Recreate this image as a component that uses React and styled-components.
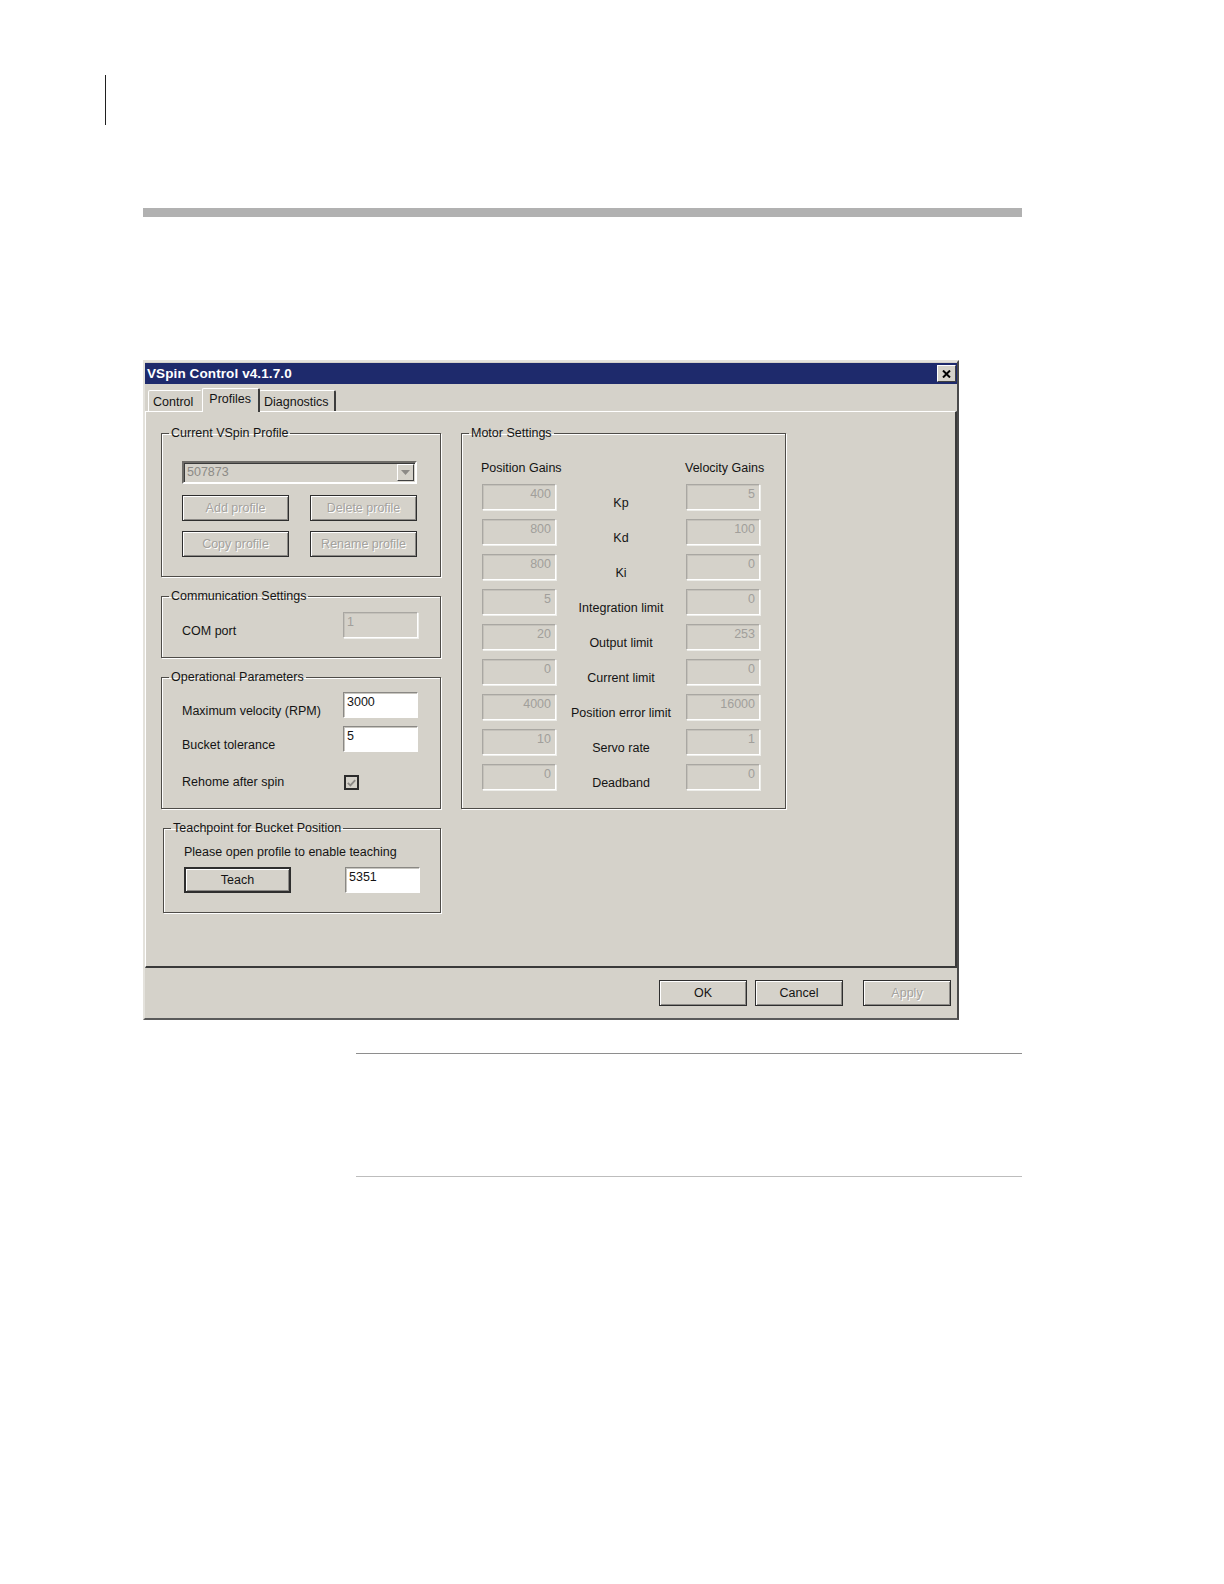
import React from 'react'
import styled, { createGlobalStyle, css } from 'styled-components'

const GlobalStyle = createGlobalStyle`
  html, body {
    margin: 0;
    background: #ffffff;
    font-family: "Liberation Sans", Arial, sans-serif;
  }
`

const Page = styled.div`
  padding: 75px 0 40px;
  background: #ffffff;
`

const Marker = styled.div`
  margin-left: 105px;
  width: 1px;
  height: 50px;
  background: #202020;
`

const Rule = styled.div`
  margin: 83px 0 0 143px;
  width: 879px;
  height: 9px;
  background: #b1b1b1;
`

const NoteLine = styled.div`
  margin: ${props => props.$top}px 0 0 356px;
  width: 666px;
  height: 1px;
  background: ${props => props.$color};
`

const Window = styled.div`
  margin: 143px 0 0 143px;
  width: 816px;
  height: 660px;
  box-sizing: border-box;
  display: flex;
  flex-direction: column;
  padding-top: 1px;
  background: #d5d2ca;
  border: 2px solid;
  border-color: #e4e2dc #4a4a4a #5a5a5a #e4e2dc;
  font-size: 12.5px;
  color: #141414;
`

const TitleBar = styled.div`
  height: 21px;
  flex: none;
  display: flex;
  align-items: center;
  justify-content: space-between;
  padding: 0 1px 0 2px;
  background: #1e2a6c;
`

const Title = styled.div`
  color: #ffffff;
  font-weight: bold;
  font-size: 13.5px;
  letter-spacing: 0.1px;
`

const CloseBox = styled.div`
  width: 19px;
  height: 17px;
  box-sizing: border-box;
  display: flex;
  align-items: center;
  justify-content: center;
  background: #d5d2ca;
  border: 1px solid;
  border-color: #ffffff #404040 #404040 #ffffff;
`

const TabStrip = styled.div`
  height: 27px;
  flex: none;
  display: flex;
  align-items: flex-end;
  padding-left: 3px;
  position: relative;
  z-index: 1;
`

const Tab = styled.div`
  height: ${props => (props.$active ? 24 : 21)}px;
  box-sizing: border-box;
  padding: ${props => (props.$active ? '3px 7px 0 6px' : '4px 5px 0 4px')};
  margin: ${props => (props.$active ? '0 -1px -1px 0' : '0')};
  border-top: 1px solid #ffffff;
  border-left: 1px solid #ffffff;
  border-right: 2px solid #3c3c3c;
  border-radius: 2px 2px 0 0;
  background: #d5d2ca;
  ${props =>
    props.$plain &&
    css`
      padding-right: 7px;
      border-right-color: transparent;
    `}
  ${props =>
    props.$active &&
    css`
      position: relative;
      z-index: 2;
    `}
`

const TabPanel = styled.div`
  height: 557px;
  flex: none;
  box-sizing: border-box;
  display: flex;
  align-items: flex-start;
  gap: 20px;
  padding: 14px 0 0 15px;
  border-top: 1px solid #ffffff;
  border-left: 1px solid #ffffff;
  border-right: 2px solid #3a3a3a;
  border-bottom: 2px solid #3a3a3a;
`

const Column = styled.div`
  width: 280px;
  display: flex;
  flex-direction: column;
  gap: 12px;
`

const Group = styled.fieldset`
  margin: ${props => props.$mt || 0}px 0 0 ${props => props.$indent || 0}px;
  min-width: 0;
  width: ${props => props.$width}px;
  box-sizing: border-box;
  padding: ${props => props.$pt}px 0 ${props => props.$pb}px 20px;
  border: 1px solid #4e4c48;
  box-shadow: inset 1px 1px 0 #ffffff, 1px 1px 0 #ffffff;
`

const Legend = styled.legend`
  margin-left: -13px;
  padding: 0 2px;
  line-height: 14px;
  font-size: 12.5px;
`

const ProfileGrid = styled.div`
  display: grid;
  grid-template-columns: 107px 107px;
  column-gap: 21px;
  row-gap: 10px;
`

const Combo = styled.div`
  grid-column: 1 / span 2;
  width: 235px;
  height: 23px;
  box-sizing: border-box;
  margin-bottom: 1px;
  display: flex;
  justify-content: space-between;
  border: 2px solid;
  border-color: #6e6c68 #ffffff #ffffff #6e6c68;
  box-shadow: inset 1px 1px 0 #3a3a3a;
  color: #8c8a86;
  padding: 2px 1px 0 3px;
  line-height: 14px;
`

const ComboArrow = styled.div`
  width: 17px;
  height: 17px;
  margin-top: -1px;
  box-sizing: border-box;
  display: flex;
  align-items: center;
  justify-content: center;
  border: 1px solid;
  border-color: #ffffff #404040 #404040 #ffffff;
  background: #d5d2ca;
`

const Button = styled.div`
  width: ${props => props.$width || 107}px;
  height: 26px;
  box-sizing: border-box;
  display: flex;
  align-items: center;
  justify-content: center;
  border: ${props => (props.$default ? 2 : 1)}px solid #2e2e2e;
  box-shadow: inset 1px 1px 0 #ffffff, inset -1px -1px 0 #8c8a86;
  background: #d5d2ca;
  color: ${props => (props.$disabled ? '#a4a29e' : '#141414')};
  text-shadow: ${props => (props.$disabled ? '1px 1px 0 #ffffff' : 'none')};
`

const FieldRow = styled.div`
  display: grid;
  grid-template-columns: 161px 75px;
  align-items: end;
  margin-top: ${props => props.$gap || 0}px;
`

const Label = styled.div`
  line-height: 14px;
  white-space: nowrap;
`

const Field = styled.div`
  height: 26px;
  box-sizing: border-box;
  padding: 2px 4px 0 3px;
  line-height: 14px;
  border: 1px solid;
  ${props =>
    props.$disabled
      ? css`
          background: #d5d2ca;
          color: #a19f9b;
          border-color: #a9a7a2 #ffffff #ffffff #a9a7a2;
          box-shadow: inset 1px 1px 0 #c4c1ba, 1px 1px 0 #eeeeea;
          text-align: ${props.$right ? 'right' : 'left'};
        `
      : css`
          background: #ffffff;
          color: #141414;
          border-color: #8a8884 #ffffff #ffffff #8a8884;
          box-shadow: inset 1px 1px 0 #c8c6c0;
        `}
`

const CheckBox = styled.div`
  width: 15px;
  height: 15px;
  box-sizing: border-box;
  margin: 0 0 -1px 1px;
  border: 2px solid #2c2c2c;
  background: #d5d2ca;
  display: flex;
  align-items: center;
  justify-content: center;
`

const Note = styled.div`
  line-height: 14px;
  margin-bottom: 8px;
`

const MotorGrid = styled.div`
  display: grid;
  grid-template-columns: 74px 130px 74px;
  grid-template-rows: 14px repeat(9, 26px);
  row-gap: 9px;
`

const GainHead = styled.div`
  line-height: 14px;
  white-space: nowrap;
  margin-left: -1px;
  ${props =>
    props.$right &&
    css`
      grid-column: 3;
    `}
`

const GainLabel = styled.div`
  align-self: end;
  text-align: center;
  line-height: 14px;
  white-space: nowrap;
`

const ButtonBar = styled.div`
  flex: 1;
  display: flex;
  justify-content: flex-end;
  align-items: flex-start;
  padding: 12px 6px 0 0;
  gap: 8px;
`

const ApplySpacer = styled.div`
  width: 4px;
`

const motorRows = [
  ['400', 'Kp', '5'],
  ['800', 'Kd', '100'],
  ['800', 'Ki', '0'],
  ['5', 'Integration limit', '0'],
  ['20', 'Output limit', '253'],
  ['0', 'Current limit', '0'],
  ['4000', 'Position error limit', '16000'],
  ['10', 'Servo rate', '1'],
  ['0', 'Deadband', '0']
]

export default function App() {
  return (
    <Page>
      <GlobalStyle />
      <Marker />
      <Rule />
      <Window>
        <TitleBar>
          <Title>VSpin Control v4.1.7.0</Title>
          <CloseBox>
            <svg width="9" height="8" viewBox="0 0 9 8">
              <path d="M1 0.5 L8 7.5 M8 0.5 L1 7.5" stroke="#000" strokeWidth="2" />
            </svg>
          </CloseBox>
        </TitleBar>
        <TabStrip>
          <Tab $plain>Control</Tab>
          <Tab $active>Profiles</Tab>
          <Tab>Diagnostics</Tab>
        </TabStrip>
        <TabPanel>
          <Column>
            <Group $width={280} $pt={21} $pb={19}>
              <Legend>Current VSpin Profile</Legend>
              <ProfileGrid>
                <Combo>
                  507873
                  <ComboArrow>
                    <svg width="9" height="5" viewBox="0 0 9 5">
                      <path d="M0 0 H9 L4.5 5 Z" fill="#8c8a86" />
                    </svg>
                  </ComboArrow>
                </Combo>
                <Button $disabled>Add profile</Button>
                <Button $disabled>Delete profile</Button>
                <Button $disabled>Copy profile</Button>
                <Button $disabled>Rename profile</Button>
              </ProfileGrid>
            </Group>
            <Group $width={280} $pt={9} $pb={19}>
              <Legend>Communication Settings</Legend>
              <FieldRow>
                <Label>COM port</Label>
                <Field $disabled>1</Field>
              </FieldRow>
            </Group>
            <Group $width={280} $pt={8} $pb={19}>
              <Legend>Operational Parameters</Legend>
              <FieldRow>
                <Label>Maximum velocity (RPM)</Label>
                <Field>3000</Field>
              </FieldRow>
              <FieldRow $gap={8}>
                <Label>Bucket tolerance</Label>
                <Field>5</Field>
              </FieldRow>
              <FieldRow $gap={23}>
                <Label>Rehome after spin</Label>
                <CheckBox>
                  <svg width="9" height="8" viewBox="0 0 9 8">
                    <path d="M0.8 3.8 L3.4 6.4 L8.2 1.2" stroke="#8c8a86" strokeWidth="1.8" fill="none" />
                  </svg>
                </CheckBox>
              </FieldRow>
            </Group>
            <Group $width={278} $indent={2} $pt={10} $pb={19}>
              <Legend>Teachpoint for Bucket Position</Legend>
              <Note>Please open profile to enable teaching</Note>
              <FieldRow>
                <Button $default>Teach</Button>
                <Field>5351</Field>
              </FieldRow>
            </Group>
          </Column>
          <Group $width={325} $pt={21} $pb={18}>
            <Legend>Motor Settings</Legend>
            <MotorGrid>
              <GainHead>Position Gains</GainHead>
              <GainHead $right>Velocity Gains</GainHead>
              {motorRows.map(([pos, name, vel]) => (
                <React.Fragment key={name}>
                  <Field $disabled $right>{pos}</Field>
                  <GainLabel>{name}</GainLabel>
                  <Field $disabled $right>{vel}</Field>
                </React.Fragment>
              ))}
            </MotorGrid>
          </Group>
        </TabPanel>
        <ButtonBar>
          <Button $width={88}>OK</Button>
          <Button $width={88}>Cancel</Button>
          <ApplySpacer />
          <Button $width={88} $disabled>Apply</Button>
        </ButtonBar>
      </Window>
      <NoteLine $top={33} $color="#8e8e8e" />
      <NoteLine $top={122} $color="#bdbdbd" />
    </Page>
  )
}
